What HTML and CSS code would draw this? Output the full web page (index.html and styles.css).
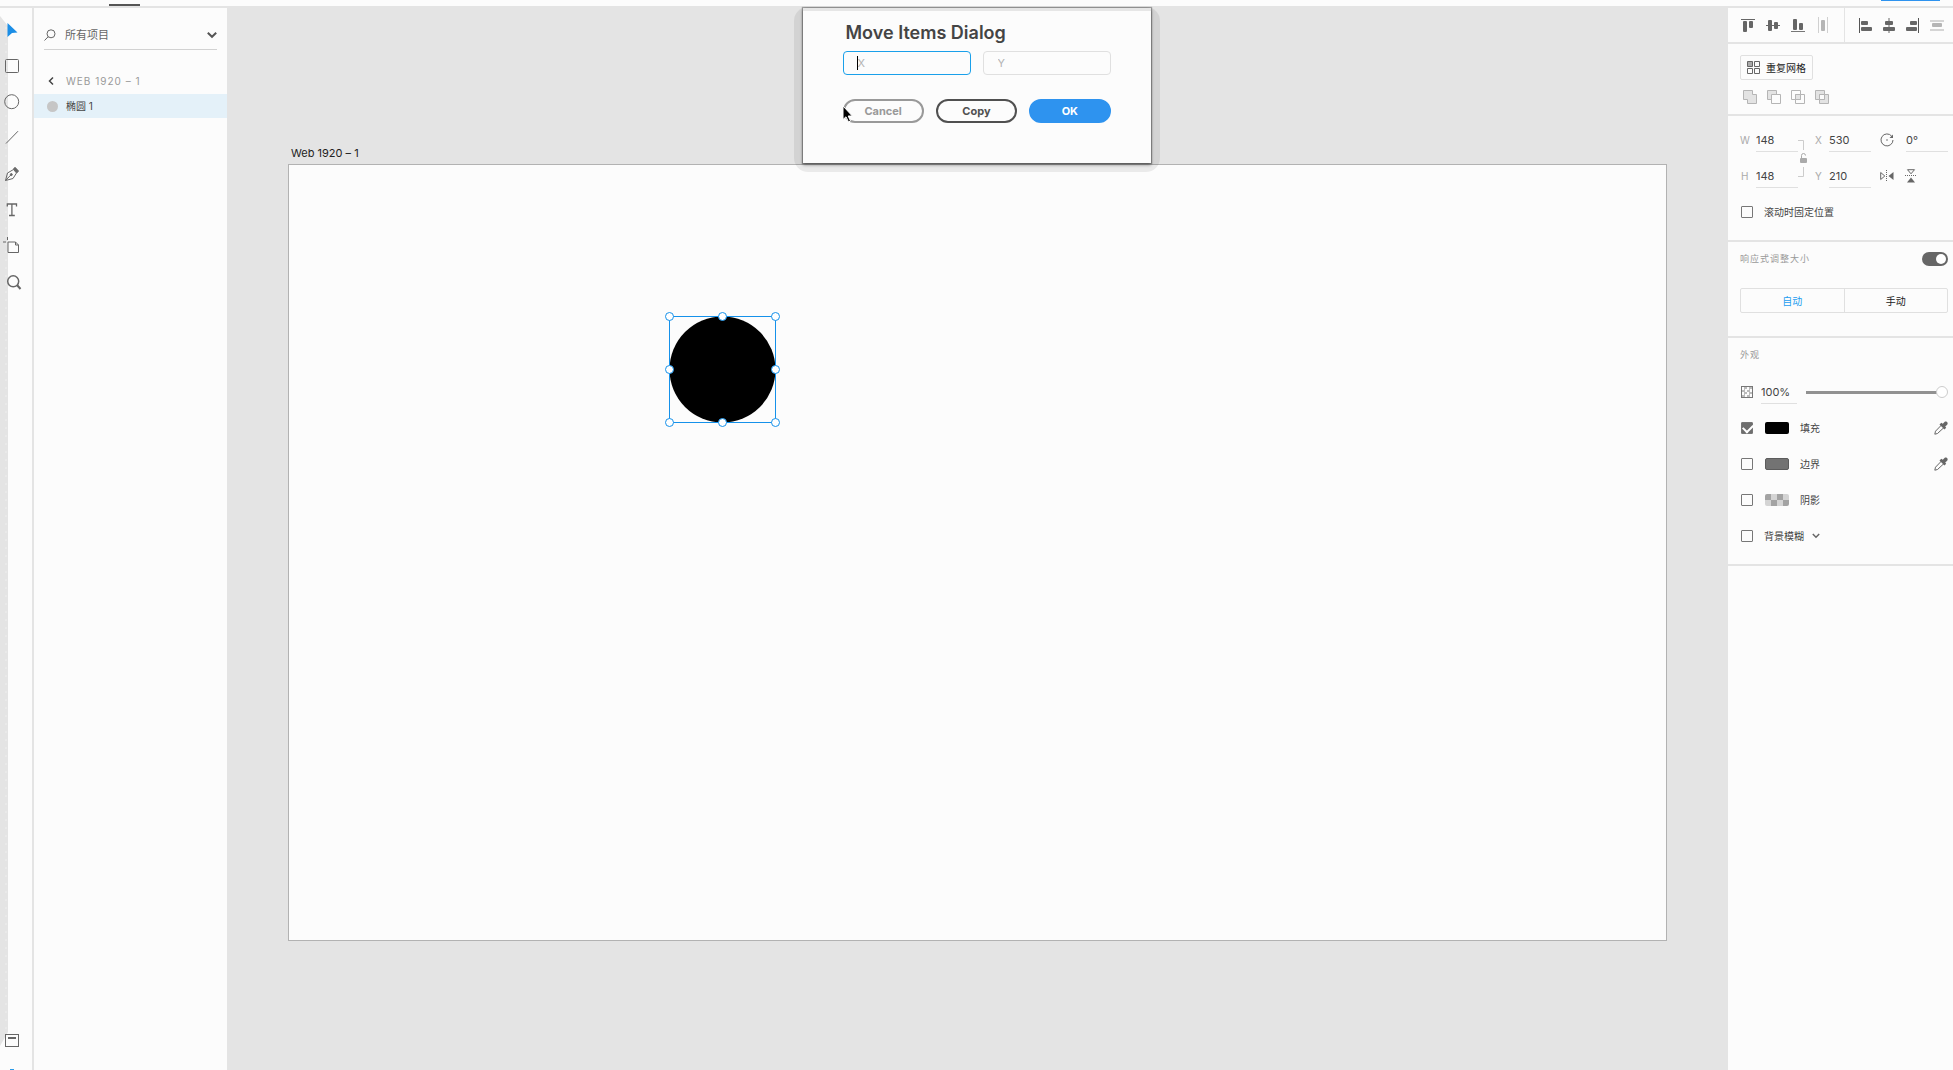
FILE: index.html
```html
<!DOCTYPE html>
<html lang="zh-CN">
<head>
<meta charset="utf-8">
<meta name="viewport" content="width=device-width, initial-scale=1">
<title>Web 1920 – 1</title>
<link rel="stylesheet" href="styles.css">
</head>
<body>
<header class="topbar">
  <span class="topbar-tab"></span>
  <span class="topbar-share"></span>
</header>
<div class="app">
  <nav class="tools" aria-label="Tools">
    <button class="tool" aria-label="Select"><svg viewBox="0 0 28 36"><path fill="#1b8ee6" d="M7.500 11 17.500 20.500 12 21 7.500 25z"/></svg></button>
    <button class="tool" aria-label="Rectangle"><svg viewBox="0 0 28 36"><rect x="5.500" y="11.500" width="13" height="13" rx="1"/></svg></button>
    <button class="tool" aria-label="Ellipse"><svg viewBox="0 0 28 36"><circle cx="11.700" cy="17.700" r="7"/></svg></button>
    <button class="tool" aria-label="Line"><svg viewBox="0 0 28 36"><path d="M6 23.500 18 11.200"/></svg></button>
    <button class="tool" aria-label="Pen"><svg viewBox="0 0 28 36"><path d="M5.500 24.500 7.500 17 13.500 13.500 16.500 17 13 22.500 5.500 24.500 11 18.800"/><circle cx="11.300" cy="18.600" r="1" fill="#666"/><path fill="#666" d="M13.500 13 15 11.300 18.500 15 17 16.800z"/></svg></button>
    <button class="tool" aria-label="Text"><svg viewBox="0 0 28 36"><path stroke-width="1.300" d="M7.300 14.500V12H16.500V14.500M11.900 12V23.500M9 23.500H14.800"/></svg></button>
    <button class="tool" aria-label="Artboard"><svg viewBox="0 0 28 36"><path d="M8 14H15.500L18.500 17V24.500H8zM15.500 14V17H18.500M3 14H6M7.500 9V12"/></svg></button>
    <button class="tool" aria-label="Zoom"><svg viewBox="0 0 28 36"><circle cx="13.200" cy="17.300" r="5.500" stroke-width="1.500"/><path stroke-width="2" d="M17 21 20.500 25"/></svg></button>
    <button class="tool tool-bottom" aria-label="Layers"><svg viewBox="0 0 28 36"><rect x="5.500" y="11.500" width="13" height="12"/><path stroke-width="2" d="M8 15H16"/></svg></button>
    <button class="tool tool-cut" aria-label="Plugins"><svg viewBox="0 0 28 36"><path stroke="#2b9be8" d="M10 10.500H14"/></svg></button>
  </nav>

  <aside class="layers">
    <div class="search">
      <svg class="search-icon" viewBox="0 0 12 12"><circle cx="7" cy="4.800" r="4"/><path d="M4.200 7.700.5 11.500"/></svg>
      <input class="search-input" type="text" placeholder="所有项目" aria-label="所有项目">
      <button class="plain" aria-label="Filter"><svg class="chevron" viewBox="0 0 10 6"><path d="M.8.8 5 4.800 9.200.8"/></svg></button>
    </div>
    <button class="crumb"><svg class="back" viewBox="0 0 6 8"><path d="M5 .5 1.500 4 5 7.500"/></svg>WEB 1920 – 1</button>
    <ul class="layer-list">
      <li class="layer"><span class="layer-dot"></span>椭圆 1</li>
    </ul>
  </aside>

  <main class="canvas">
    <h1 class="artboard-name">Web 1920 – 1</h1>
    <div class="artboard">
      <svg class="shape" viewBox="0 0 116 116">
        <circle cx="57.500" cy="57.500" r="53" fill="#000"/>
        <g fill="#fff" stroke="#1591ea">
          <rect x="4.500" y="4.500" width="106" height="106" fill="none"/>
          <circle cx="4.500" cy="4.500" r="4"/><circle cx="57.500" cy="4.500" r="4"/><circle cx="110.500" cy="4.500" r="4"/>
          <circle cx="4.500" cy="57.500" r="4"/><circle cx="110.500" cy="57.500" r="4"/>
          <circle cx="4.500" cy="110.500" r="4"/><circle cx="57.500" cy="110.500" r="4"/><circle cx="110.500" cy="110.500" r="4"/>
        </g>
      </svg>
    </div>
  </main>

  <aside class="inspector">
    <section class="align">
      <div class="align-group align-v">
        <button class="plain" aria-label="Align top"><svg viewBox="0 0 16 16"><path d="M1 2.500H15" stroke="#666"/><rect x="3" y="4" width="4" height="11" rx="1"/><rect x="9" y="4" width="4" height="7" rx="1"/></svg></button>
        <button class="plain" aria-label="Align middle"><svg viewBox="0 0 16 16"><path d="M1 8.500H15" stroke="#666"/><rect x="3" y="3" width="4" height="11" rx="1"/><rect x="9" y="5" width="4" height="7" rx="1"/></svg></button>
        <button class="plain" aria-label="Align bottom"><svg viewBox="0 0 16 16"><path d="M1 14.500H15" stroke="#777"/><rect x="3" y="2" width="4" height="11" rx="1"/><rect x="9" y="6" width="4" height="7" rx="1"/></svg></button>
        <button class="plain" aria-label="Distribute horizontally"><svg viewBox="0 0 16 16"><path d="M3.500 0V16M12.500 0V16" stroke="#d0d0d0"/><rect x="6" y="3" width="4" height="11" rx="1" fill="#b5b5b5"/></svg></button>
      </div>
      <div class="align-group align-h">
        <button class="plain" aria-label="Align left"><svg viewBox="0 0 16 16"><path d="M2.500 1V16" stroke="#555"/><rect x="4" y="4" width="7" height="4" rx="1"/><rect x="4" y="10" width="11" height="4" rx="1"/></svg></button>
        <button class="plain" aria-label="Align center"><svg viewBox="0 0 16 16"><path d="M8 1V16" stroke="#666"/><rect x="4" y="4" width="8" height="4" rx="1"/><rect x="2" y="10" width="12" height="4" rx="1"/></svg></button>
        <button class="plain" aria-label="Align right"><svg viewBox="0 0 16 16"><path d="M13.500 1V16" stroke="#555"/><rect x="5" y="4" width="7" height="4" rx="1"/><rect x="1" y="10" width="11" height="4" rx="1"/></svg></button>
        <button class="plain" aria-label="Distribute vertically"><svg viewBox="0 0 16 16"><path d="M1 4H15M1 13H15" stroke="#d5d5d5" stroke-width="2"/><rect x="3" y="6" width="10" height="4" rx="1" fill="#b5b5b5"/></svg></button>
      </div>
    </section>

    <section class="section repeat">
      <button class="repeat-button"><svg viewBox="0 0 13 13"><path d="M.5.500H5.500V5.500H.5z" fill="#aaa"/><path d="M7.500.500H12.500V5.500H7.500zM.5 7.500H5.500V12.500H.5zM7.500 7.500H12.500V12.500H7.500z"/></svg>重复网格</button>
      <div class="boolean">
        <button class="plain" aria-label="Add"><svg viewBox="0 0 14 14"><path fill="#e3e3e3" d="M.5.500H9.500V4.500H13.500V13.500H4.500V9.500H.5z"/></svg></button>
        <button class="plain" aria-label="Subtract"><svg viewBox="0 0 14 14"><path fill="#e3e3e3" d="M.5.500H9.500V9.500H.5z"/><path fill="#fcfcfc" d="M4.500 4.500H13.500V13.500H4.500z"/></svg></button>
        <button class="plain" aria-label="Intersect"><svg viewBox="0 0 14 14"><path d="M.5.500H9.500V9.500H.5zM4.500 4.500H13.500V13.500H4.500z"/><path fill="#e3e3e3" d="M4.500 4.500H9.500V9.500H4.500z"/></svg></button>
        <button class="plain" aria-label="Exclude overlap"><svg viewBox="0 0 14 14"><path fill="#e3e3e3" d="M.5.500H9.500V9.500H.5zM4.500 4.500H13.500V13.500H4.500z"/><path fill="#fcfcfc" d="M4.500 4.500H9.500V9.500H4.500z"/></svg></button>
      </div>
    </section>

    <section class="section transform">
      <div class="transform-grid">
        <label class="axis" for="w">W</label><input class="value" id="w" value="148">
        <svg class="lock" viewBox="0 0 17 60"><g fill="none" stroke="#ccc"><path d="M0 12.500H5.500V22M0 48.500H5.500V39"/></g><rect x="2" y="30" width="7" height="5" rx="1" fill="#aaa"/><path d="M3.500 30V27.500A2 2 0 0 1 7.500 27.500" fill="none" stroke="#aaa"/></svg>
        <label class="axis" for="x">X</label><input class="value" id="x" value="530">
        <svg class="rotate" viewBox="0 0 14 14"><path d="M11.700 3.200A6 6 0 1 0 13 7" fill="none" stroke="#666"/><path d="M13 1.500V5H9.500z" fill="#666"/><circle cx="7" cy="7" r=".8" fill="#666"/></svg>
        <input class="value" id="r" value="0°" aria-label="Rotation">
        <label class="axis" for="h">H</label><input class="value" id="h" value="148">
        <label class="axis axis-y" for="y">Y</label><input class="value" id="y" value="210">
        <div class="flips">
          <button class="plain" aria-label="Flip horizontally"><svg viewBox="0 0 14 14"><path d="M.7 3.500V10.500L4.800 7z" fill="none" stroke="#666"/><path d="M13.500 3V11L8.500 7z" fill="#666"/><path d="M6.500 1V13" stroke="#666" stroke-dasharray="1 1"/></svg></button>
          <button class="plain" aria-label="Flip vertically"><svg viewBox="0 0 14 14"><path d="M3.500.7H10.500L7 4.800z" fill="none" stroke="#666"/><path d="M3 13.500H11L7 8.500z" fill="#666"/><path d="M1 6.500H13" stroke="#666" stroke-dasharray="1 1"/></svg></button>
        </div>
      </div>
      <label class="check-row"><input class="check" type="checkbox">滚动时固定位置</label>
    </section>

    <section class="section responsive">
      <div class="heading-row">
        <h2 class="heading" id="resp">响应式调整大小</h2>
        <input class="toggle" type="checkbox" role="switch" aria-labelledby="resp" checked>
      </div>
      <div class="segmented">
        <button class="segment segment-on">自动</button>
        <button class="segment">手动</button>
      </div>
    </section>

    <section class="section appearance">
      <h2 class="heading">外观</h2>
      <div class="row">
        <span class="checker"></span>
        <input class="value value-opacity" value="100%" aria-label="Opacity">
        <input class="slider" type="range" min="0" max="100" value="100" aria-label="Opacity slider">
      </div>
      <div class="row">
        <input class="check" type="checkbox" id="fill" checked>
        <span class="swatch swatch-fill"></span><label for="fill">填充</label>
        <button class="plain picker" aria-label="Pick fill"><svg viewBox="0 0 14 14"><path d="M7.500 4 1.500 10.200 .8 13.200 3.500 12.500 10 6.500" fill="none" stroke="#666"/><path d="M5.500 3.500 7.300 1.800 8.800 2.800 10.500 1C12 -.5 14.800 1.800 13.200 3.700L11.200 5.400 12.200 6.700 10.500 8.500z" fill="#666"/></svg></button>
      </div>
      <div class="row">
        <input class="check" type="checkbox" id="border">
        <span class="swatch swatch-border"></span><label for="border">边界</label>
        <button class="plain picker" aria-label="Pick border"><svg viewBox="0 0 14 14"><path d="M7.500 4 1.500 10.200 .8 13.200 3.500 12.500 10 6.500" fill="none" stroke="#666"/><path d="M5.500 3.500 7.300 1.800 8.800 2.800 10.500 1C12 -.5 14.800 1.800 13.200 3.700L11.200 5.400 12.200 6.700 10.500 8.500z" fill="#666"/></svg></button>
      </div>
      <div class="row">
        <input class="check" type="checkbox" id="shadow">
        <span class="swatch swatch-shadow"></span><label for="shadow">阴影</label>
      </div>
      <div class="row">
        <label class="check-row"><input class="check" type="checkbox">背景模糊</label>
        <button class="plain" aria-label="Blur type"><svg class="small-chevron" viewBox="0 0 8 6"><path d="M.8 1 4 4.200 7.200 1"/></svg></button>
      </div>
    </section>
  </aside>
</div>

<form class="dialog" role="dialog" aria-labelledby="dialog-title">
  <h2 class="dialog-title" id="dialog-title">Move Items Dialog</h2>
  <div class="dialog-fields">
    <div class="field field-active"><input type="text" placeholder="X" aria-label="X"></div>
    <div class="field"><input type="text" placeholder="Y" aria-label="Y"></div>
  </div>
  <div class="dialog-buttons">
    <button class="pill pill-cancel" type="button">Cancel</button>
    <button class="pill pill-copy" type="button">Copy</button>
    <button class="pill pill-ok" type="button">OK</button>
  </div>
  <svg class="pointer" viewBox="0 0 12 18"><path d="M1 1V14.500L4 11.800 6.500 17 8.500 16 6.200 11H10.300z" fill="#000" stroke="#fff"/></svg>
</form>
</body>
</html>
```
FILE: styles.css
```css
* { box-sizing: border-box; }

body {
  margin: 0;
  height: 100vh;
  display: flex;
  flex-direction: column;
  overflow: hidden;
  background: #fcfcfc;
  color: #444;
  font: 10px/18px Inter, "Noto Sans CJK SC", sans-serif;
}

button, input { font: inherit; color: inherit; }
button { cursor: pointer; }
h1, h2, ul { margin: 0; padding: 0; font: inherit; list-style: none; }
svg { display: block; flex: none; overflow: visible; }

.plain {
  padding: 0;
  border: 0;
  background: none;
}

.topbar {
  flex: none;
  display: flex;
  justify-content: space-between;
  height: 8px;
  padding: 0 13px 0 109px;
  border-bottom: 2px solid #e4e4e4;
}
.topbar-tab { width: 31px; height: 2px; margin-top: 4px; background: #555; }
.topbar-share { width: 59px; height: 1px; background: #2e93ef; }

.app { flex: 1; display: flex; min-height: 0; }

/* Tool column */
.tools {
  position: relative;
  flex: none;
  display: flex;
  flex-direction: column;
  width: 34px;
  padding-top: 4px;
  border-right: 2px solid #e4e4e4;
  overflow: hidden;
}
.tools::before {
  content: "";
  position: absolute;
  inset: 8px auto 24px 0;
  width: 8px;
  background: linear-gradient(#fcfcfc, #fcfcfc) 6px 3px / 1px 1px no-repeat, radial-gradient(circle at 6px 4px, #f6f6f6 0, #e4e4e4 1px) 0 0 / 8px 8px;
  clip-path: polygon(0 0, 8px 10px, 8px calc(100% - 14px), 0 100%);
}
.tool {
  position: relative;
  flex: none;
  width: 28px;
  height: 36px;
  padding: 0;
  border: 0;
  background: none;
}
.tool svg { width: 28px; height: 36px; fill: none; stroke: #666; }
.tool:first-child svg { stroke: none; }
.tool-bottom { margin-top: auto; }
.tool-cut { height: 11px; }
.tool-cut svg { height: 36px; }

/* Layers panel */
.layers { flex: none; width: 193px; }
.search {
  display: flex;
  align-items: center;
  height: 42px;
  margin: 0 10px;
  padding-top: 12px;
  border-bottom: 1px solid #d2d2d2;
}
.search-icon { width: 12px; height: 12px; fill: none; stroke: #666; }
.search-input {
  flex: 1;
  min-width: 0;
  padding: 0 0 0 9px;
  border: 0;
  background: none;
  font-size: 11px;
}
.search-input::placeholder { color: #666; opacity: 1; }
.chevron { width: 10px; height: 6px; fill: none; stroke: #555; stroke-width: 2; }
.crumb {
  display: flex;
  align-items: center;
  gap: 12px;
  margin: 22px 0 4px;
  padding: 0 0 0 14px;
  border: 0;
  background: none;
  color: #999;
  letter-spacing: 1px;
}
.back { width: 6px; height: 8px; fill: none; stroke: #444; stroke-width: 1.5; }
.layer {
  display: flex;
  align-items: center;
  gap: 8px;
  height: 24px;
  padding-left: 13px;
  background: #e4f1f9;
}
.layer-dot { width: 11px; height: 11px; border-radius: 50%; background: #c6c6c6; }

/* Canvas */
.canvas {
  flex: 1;
  display: flex;
  flex-direction: column;
  min-width: 0;
  padding: 136px 61px 129px 61px;
  background: #e4e4e4;
}
.artboard-name {
  margin-left: 3px;
  margin-bottom: 2px;
  color: #222;
  font-size: 11px;
}
.artboard {
  position: relative;
  flex: 1;
  border: 1px solid #b2b2b2;
  background: #fcfcfc;
}
.shape { position: absolute; left: 376px; top: 147px; width: 116px; height: 116px; }

/* Inspector */
.inspector { flex: none; width: 225px; }
.section { padding: 0 5px 0 12px; border-bottom: 2px solid #e4e4e4; }

.align { display: flex; height: 36px; border-bottom: 2px solid #e4e4e4; }
.align-group { display: flex; align-items: center; padding-left: 8px; }
.align-group button { width: 24px; height: 24px; }
.align-group svg { width: 16px; height: 16px; margin: auto; fill: #666; }
.align-v { width: 117px; gap: 1px; border-right: 1px solid #e4e4e4; }

.repeat { padding-top: 11px; padding-bottom: 10px; }
.repeat-button {
  display: flex;
  align-items: center;
  gap: 6px;
  height: 25px;
  padding: 0 6px;
  border: 1px solid #e0e0e0;
  border-radius: 2px;
  background: none;
  color: #222;
}
.repeat-button svg { width: 13px; height: 13px; fill: none; stroke: #666; }
.boolean { display: flex; gap: 10px; margin-top: 10px; padding-left: 3px; }
.boolean svg { width: 14px; height: 14px; fill: none; stroke: #b5b5b5; }

.transform { padding-top: 12px; padding-bottom: 19px; }
.transform-grid {
  display: grid;
  grid-template-columns: 16px 42px 17px 14px 42px 35px 42px;
  grid-template-rows: 24px 24px;
  row-gap: 12px;
  align-items: center;
}
.axis { color: #aaa; }
.axis[for="h"] { padding-left: 1px; }
.value {
  width: 100%;
  height: 24px;
  padding: 0;
  border: 0;
  border-bottom: 1px solid #e0e0e0;
  background: none;
  font-size: 11px;
}
.lock { grid-row: 1 / 3; grid-column: 3; width: 17px; height: 60px; }
.rotate { width: 14px; height: 14px; margin-left: 9px; }
.flips { grid-column: 6 / 8; display: flex; gap: 10px; padding-left: 9px; }
.flips svg { width: 14px; height: 14px; }
.check-row { display: flex; align-items: center; gap: 11px; }
.transform .check-row { margin-top: 15px; }
.check {
  appearance: none;
  flex: none;
  width: 12px;
  height: 12px;
  margin: 0 0 0 1px;
  border: 1px solid #777;
  border-radius: 1px;
}
.check:checked { background: #6e6e6e; }
.check:checked::before {
  content: "";
  display: block;
  width: 8px;
  height: 5px;
  margin: 1px;
  border: solid #fff;
  border-width: 0 0 2px 2px;
  transform: rotate(-45deg);
}

.responsive { padding-top: 8px; padding-bottom: 23px; }
.heading-row { display: flex; align-items: center; justify-content: space-between; }
.heading { color: #999; font-size: 9px; letter-spacing: 1px; }
.toggle {
  appearance: none;
  width: 26px;
  height: 14px;
  margin: 0;
  padding: 2px;
  border-radius: 7px;
  background: #666;
}
.toggle::before {
  content: "";
  display: block;
  width: 10px;
  height: 10px;
  margin-left: auto;
  border-radius: 50%;
  background: #fff;
}
.segmented {
  display: flex;
  height: 25px;
  margin-top: 20px;
  border: 1px solid #e0e0e0;
  border-radius: 2px;
}
.segment { flex: 1; padding: 0; border: 0; background: none; color: #222; }
.segment + .segment { border-left: 1px solid #e0e0e0; }
.segment-on { color: #1c9df0; }

.appearance { padding-top: 8px; padding-bottom: 10px; }
.appearance .heading { margin-bottom: 10px; }
.row { display: flex; align-items: center; height: 36px; }
.checker {
  width: 12px;
  height: 12px;
  margin-left: 1px;
  border: 1px solid #777;
  background: repeating-conic-gradient(#bbb 0 25%, #fcfcfc 0 50%) 0 0 / 5px 5px;
}
.value-opacity { width: 36px; margin-left: 8px; }
.slider {
  appearance: none;
  flex: 1;
  min-width: 0;
  height: 14px;
  margin: 0 0 0 9px;
  background: linear-gradient(#919191, #919191) 0 50% / calc(100% - 10px) 3px no-repeat;
}
.slider::-webkit-slider-thumb {
  appearance: none;
  width: 12px;
  height: 12px;
  border: 1px solid #ccc;
  border-radius: 50%;
  background: #fff;
}
.swatch {
  width: 24px;
  height: 12px;
  margin: 0 11px 0 12px;
  border-radius: 2px;
}
.swatch-fill { background: #000; }
.swatch-border { border: 1px solid #5c5c5c; background: #737373; }
.swatch-shadow { background: repeating-conic-gradient(#d4d4d4 0 25%, #a3a3a3 0 50%) 0 0 / 12px 12px; }
.picker { margin-left: auto; }
.picker svg { width: 14px; height: 14px; }
.row .plain:not(.picker) { margin-left: 8px; }
.small-chevron { width: 8px; height: 6px; fill: none; stroke: #666; stroke-width: 1.5; }

/* Dialog, floating over the canvas */
.dialog {
  position: absolute;
  z-index: 1;
  top: 8px;
  left: 50%;
  width: 348px;
  margin-left: -174px;
  padding: 13px 40px 40px;
}
.dialog::before,
.dialog::after {
  content: "";
  position: absolute;
}
.dialog::before {
  z-index: -2;
  inset: -1px -9px -9px;
  border-radius: 14px;
  background: rgba(0, 0, 0, .07);
}
.dialog::after {
  z-index: -1;
  inset: 0;
  background: linear-gradient(#e6e6e6 3px, #fcfcfc 3px);
  box-shadow: 0 0 1px 1px rgba(0, 0, 0, .3), 0 2px 3px rgba(0, 0, 0, .4);
}
.dialog-title {
  margin: 0 0 6px 3px;
  color: #444;
  font-size: 18px;
  font-weight: 600;
  line-height: 24px;
  white-space: nowrap;
}
.dialog-fields, .dialog-buttons { display: grid; gap: 12px; width: 268px; }
.dialog-fields { grid-template-columns: 1fr 1fr; }
.dialog-buttons { grid-template-columns: 1fr 1fr 1fr; margin-top: 24px; }
.field { position: relative; }
.field input {
  display: block;
  width: 100%;
  height: 24px;
  padding: 0 14px;
  border: 1px solid #e0e0e0;
  border-radius: 4px;
  background: #fcfcfc;
  font-size: 11px;
}
.field input::placeholder { color: #b3b3b3; opacity: 1; }
.field-active input { border-color: #1aa0ea; }
.field-active::before {
  content: "";
  position: absolute;
  top: 5px;
  left: 14px;
  width: 1px;
  height: 14px;
  background: #000;
}
.pill {
  height: 24px;
  padding: 0;
  border: 2px solid;
  border-radius: 12px;
  background: none;
  font-size: 11px;
  font-weight: 700;
}
.pill-cancel { color: #999; }
.pill-copy { color: #505050; }
.pill-ok { border-color: #2e93ef; background: #2e93ef; color: #fff; }
.pointer { position: absolute; left: 39px; top: 97px; width: 12px; height: 18px; }
```
